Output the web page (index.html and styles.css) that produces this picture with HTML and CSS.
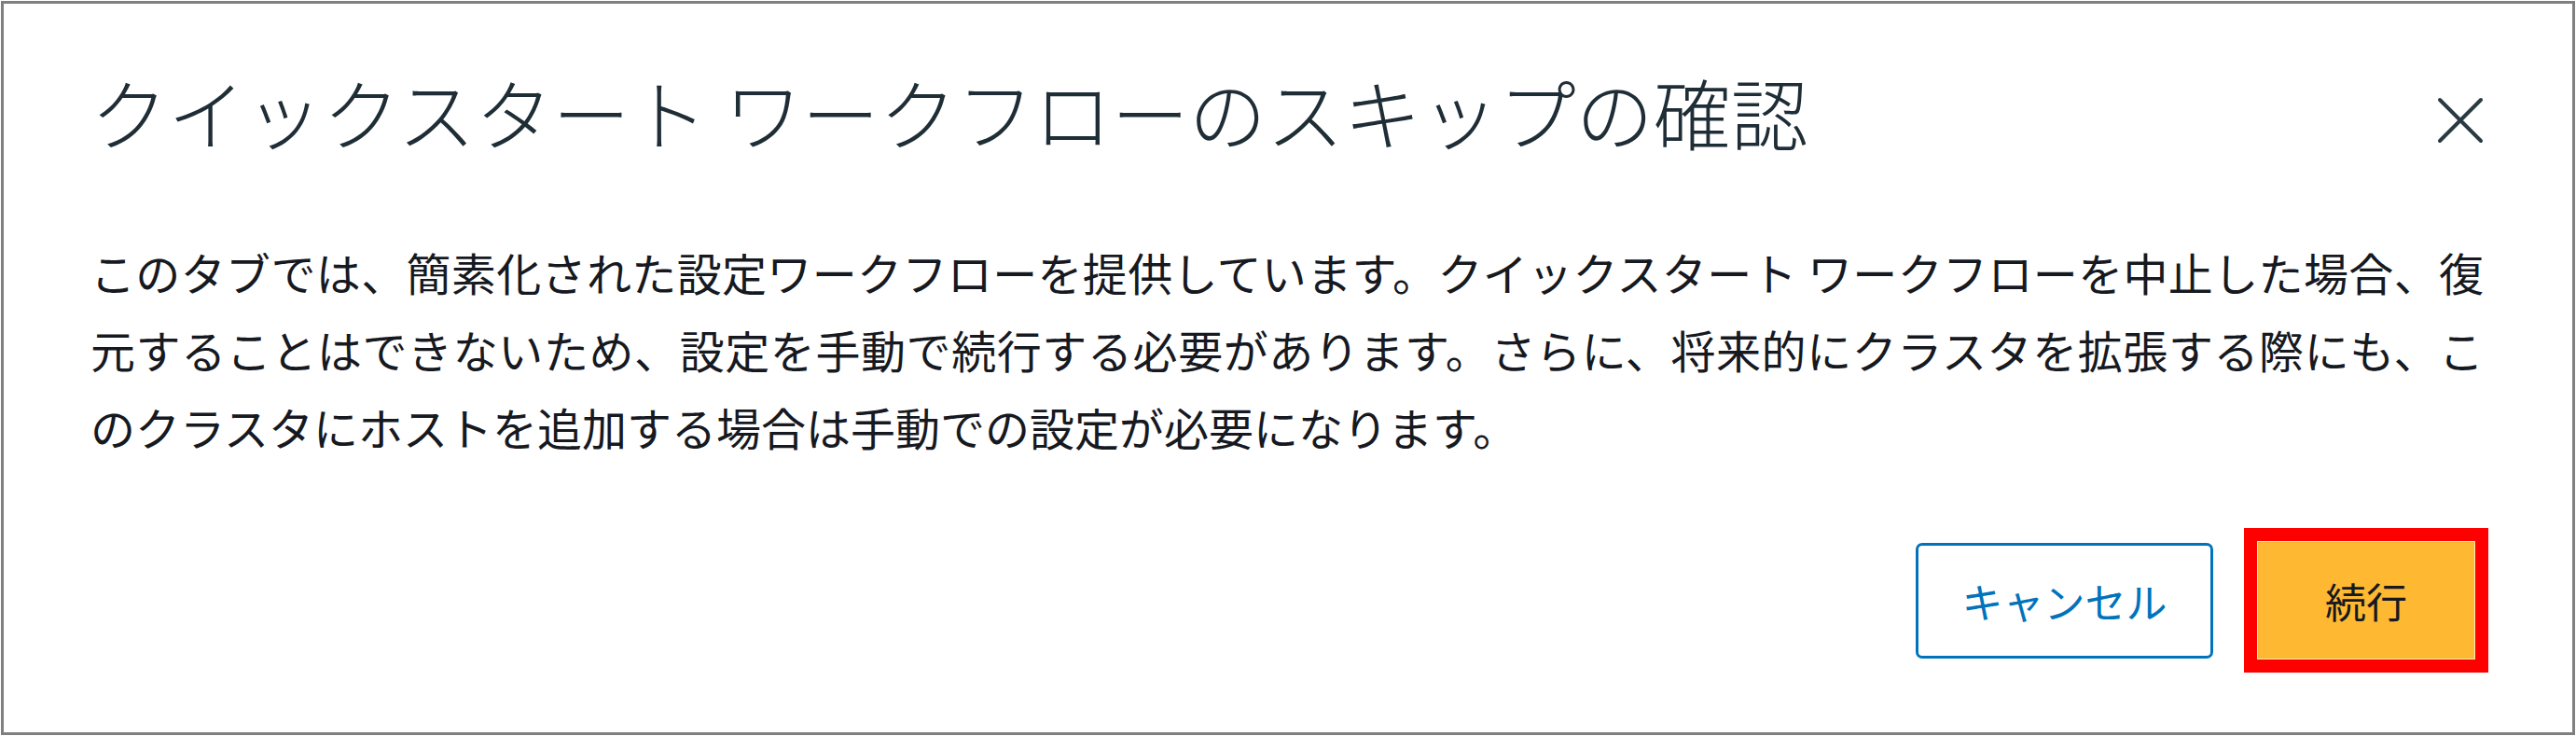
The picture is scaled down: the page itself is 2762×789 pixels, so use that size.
FILE: index.html
```html
<!DOCTYPE html>
<html lang="ja">
<head>
<meta charset="utf-8">
<title>クイックスタート ワークフローのスキップの確認</title>
<link rel="stylesheet" href="styles.css">
</head>
<body>
<div class="frame">
  <div class="dialog">
    <header class="dialog-header">
      <h1 class="dialog-title">クイックスタート ワークフローのスキップの確認</h1>
      <button class="close" type="button" aria-label="閉じる">
        <svg viewBox="0 0 50 50" width="50" height="50" aria-hidden="true">
          <path d="M3 3 L47 47 M47 3 L3 47" fill="none" stroke="#2a3a42" stroke-width="4" stroke-linecap="round"/>
        </svg>
      </button>
    </header>
    <p class="dialog-body">
      <span class="ln">このタブでは、簡素化された設定ワークフローを提供しています。クイックスタート ワークフローを中止した場合、復</span>
      <span class="ln">元することはできないため、設定を手動で続行する必要があります。さらに、将来的にクラスタを拡張する際にも、こ</span>
      <span class="ln last">のクラスタにホストを追加する場合は手動での設定が必要になります。</span>
    </p>
    <footer class="dialog-footer">
      <button class="btn btn-normal" type="button">キャンセル</button>
      <button class="btn btn-primary highlighted" type="button">続行</button>
    </footer>
  </div>
</div>
</body>
</html>
```

FILE: styles.css
```css
html, body {
  margin: 0;
  padding: 0;
  background: #ffffff;
}

body {
  font-family: "Noto Sans CJK JP", "Noto Sans", sans-serif;
  color: #16191f;
}

.frame {
  box-sizing: border-box;
  width: 2760px;
  height: 787px;
  margin: 1px 0 0 1px;
  border: 3px solid #808080;
  background: #ffffff;
}

.dialog {
  padding: 0 95px 0 93px;
  display: flex;
  flex-direction: column;
}

.dialog-header {
  display: flex;
  justify-content: space-between;
  align-items: flex-start;
  padding-top: 66px;
}

.dialog-title {
  margin: 0;
  font-size: 83px;
  line-height: 98px;
  font-weight: 300;
  color: #1e2d36;
  white-space: nowrap;
}

.close {
  margin: 34px 0 0 0;
  padding: 0;
  border: 0;
  background: transparent;
  width: 50px;
  height: 50px;
  display: flex;
}

.dialog-body {
  margin: 82px 0 0 0;
  font-size: 48px;
  line-height: 83px;
  color: #16191f;
}

.ln {
  display: block;
  text-align: justify;
  text-align-last: justify;
  white-space: nowrap;
}

.ln.last {
  text-align-last: left;
}

.dialog-footer {
  display: flex;
  justify-content: flex-end;
  align-items: center;
  gap: 47px;
  margin-top: 81px;
  padding-right: 9px;
}

.btn {
  font-family: "Noto Sans CJK JP", "Noto Sans", sans-serif;
  font-size: 44px;
  line-height: 1;
  cursor: pointer;
  display: flex;
  align-items: center;
  justify-content: center;
  box-sizing: border-box;
}

.btn-normal {
  height: 124px;
  width: 319px;
  border: 3px solid #0073bb;
  border-radius: 7px;
  background: #ffffff;
  color: #0073bb;
}

.btn-primary {
  height: 127px;
  width: 234px;
  border: 1px solid #fde6b8;
  border-radius: 0;
  background: #feb831;
  color: #16191f;
}

.highlighted {
  outline: 14px solid #ff0000;
  outline-offset: 0;
}
```
